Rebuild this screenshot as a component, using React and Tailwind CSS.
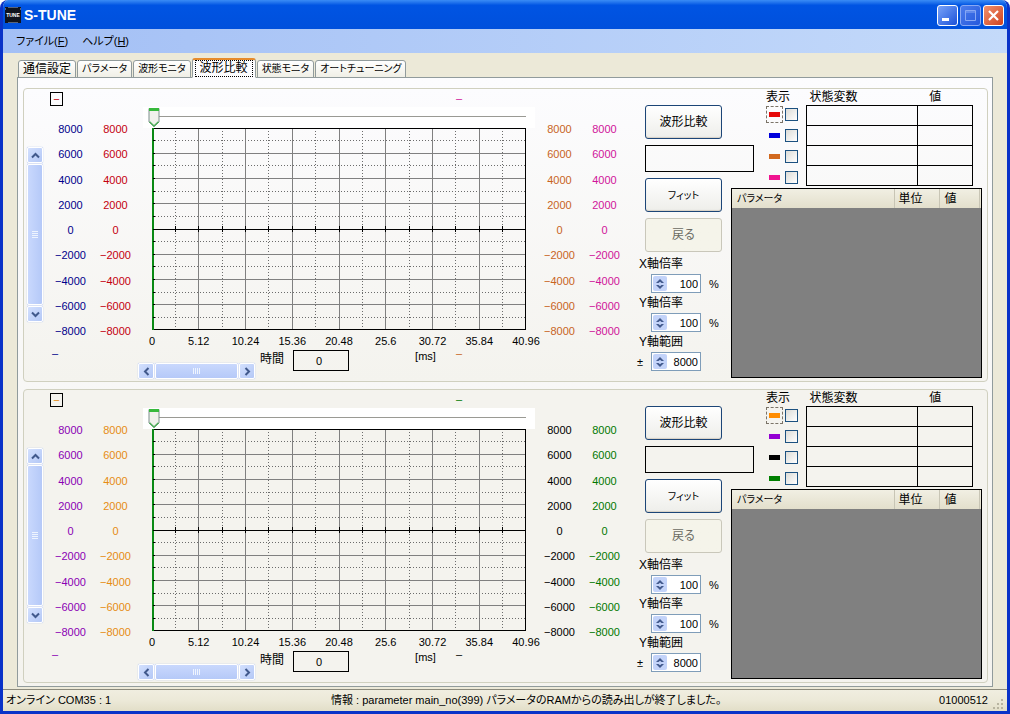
import React, { useId, useState } from "react";

const TABS = [
  { name: "通信設定", kana: false },
  { name: "パラメータ", kana: true },
  { name: "波形モニタ", kana: true },
  { name: "波形比較", kana: false },
  { name: "状態モニタ", kana: true },
  { name: "オートチューニング", kana: true },
];

const Y_TICKS = [8000, 6000, 4000, 2000, 0, -2000, -4000, -6000, -8000];
const X_TICKS = ["0", "5.12", "10.24", "15.36", "20.48", "25.6", "30.72", "35.84", "40.96"];

const SCOPES = [
  {
    id: "upper",
    panel: "bg-linear-to-b from-[#fcfcfe] to-[#f4f3ee]",
    axes: ["text-[#00008b]", "text-[#c40010]", "text-[#c8641e]", "text-[#d0149a]"],
    units: ["text-[#c40010]", "text-[#d0149a]", "text-[#00008b]", "text-[#c8641e]"],
    legend: ["bg-[#e60a0a]", "bg-[#0000dc]", "bg-[#d2691e]", "bg-[#f01490]"],
  },
  {
    id: "lower",
    panel: "bg-[#f4f3ee]",
    axes: ["text-[#8a00b4]", "text-[#e68c14]", "text-black", "text-[#007800]"],
    units: ["text-[#e68c14]", "text-[#007800]", "text-[#8a00b4]", "text-black"],
    legend: ["bg-[#ff8c00]", "bg-[#9400d3]", "bg-black", "bg-[#008000]"],
  },
];

const Chevron = ({ d }) => (
  <svg width="9" height="9" viewBox="0 0 9 9" fill="none" stroke="#41598c" strokeWidth="2">
    <path d={d} />
  </svg>
);

const arrowClass =
  "flex size-4 shrink-0 items-center justify-center rounded-xs border border-white bg-linear-to-br from-[#d3e0fe] to-[#b4c8f6] shadow-[0_0_1px_#7d9be0]";

const VerticalScroll = () => (
  <div className="mt-10 flex h-[175px] w-4 flex-col gap-px bg-[#f2f3fb]">
    <button type="button" aria-label="上へ" className={arrowClass}>
      <Chevron d="M1 6.5 4.5 3 8 6.5" />
    </button>
    <div className="flex flex-1 flex-col items-center justify-center gap-px rounded-xs border border-white bg-linear-to-r from-[#c9d8fd] to-[#b5c9f8] shadow-[0_0_1px_#7d9be0]">
      {[0, 1, 2, 3].map((i) => (
        <span key={i} className="h-px w-1.5 bg-[#eef4fe]" />
      ))}
    </div>
    <button type="button" aria-label="下へ" className={arrowClass}>
      <Chevron d="M1 2.5 4.5 6 8 2.5" />
    </button>
  </div>
);

const HorizontalScroll = () => (
  <div className="flex h-4 w-[117px] shrink-0 gap-px bg-[#f2f3fb]">
    <button type="button" aria-label="左へ" className={arrowClass}>
      <Chevron d="M6.5 1 3 4.5 6.5 8" />
    </button>
    <div className="flex flex-1 items-center justify-center gap-px rounded-xs border border-white bg-linear-to-b from-[#c9d8fd] to-[#b5c9f8] shadow-[0_0_1px_#7d9be0]">
      {[0, 1, 2, 3].map((i) => (
        <span key={i} className="h-1.5 w-px bg-[#eef4fe]" />
      ))}
    </div>
    <button type="button" aria-label="右へ" className={arrowClass}>
      <Chevron d="M2.5 1 6 4.5 2.5 8" />
    </button>
  </div>
);

const AxisLabels = ({ color, column }) => (
  <div
    className={`row-start-2 mt-[15px] flex h-[216px] flex-col justify-between text-center leading-[14px] ${column} ${color}`}
  >
    {Y_TICKS.map((v) => (
      <span key={v}>{v < 0 ? `−${-v}` : v}</span>
    ))}
  </div>
);

const TimeSlider = () => {
  const [time, setTime] = useState(0);
  return (
    <div className="relative mr-0.5 ml-[5px] h-[21px] bg-white">
      <div className="mr-[9px] ml-4 h-[10px] border-b border-[#9a9a94]" />
      <div className="absolute inset-y-0 right-[15px] left-[11px]">
        <svg
          className="absolute top-0 -ml-[6px]"
          style={{ left: `${time}%` }}
          width="12"
          height="20"
          viewBox="0 0 12 20"
        >
          <path d="M1 1.5h10V15L6 19.5 1 15Z" fill="#f0f1ec" stroke="#7c8f8c" />
          <path d="M1 1h10v3H1Z" fill="#37b93c" />
          <path d="M1.500 14.800 6 19l4.500-4.200" fill="none" stroke="#4fae5a" strokeWidth="1.500" />
        </svg>
      </div>
      <input
        type="range"
        aria-label="カーソル"
        min="0"
        max="100"
        value={time}
        onChange={(e) => setTime(Number(e.target.value))}
        className="absolute inset-0 h-full w-full opacity-0"
      />
    </div>
  );
};

const Plot = () => {
  const steps = Array.from({ length: 15 }, (_, i) => i + 1);
  const pos = (i) => `${i * 6.25}%`;
  return (
    <svg className="block h-[202px] w-full" shapeRendering="crispEdges">
      {steps.map((i) => (
        <g key={i} stroke={i % 2 ? "#6c6c6c" : "#808080"} strokeDasharray={i % 2 ? "1 2" : undefined}>
          <line x1={pos(i)} x2={pos(i)} y1="0" y2="100%" />
          <line x1="0" x2="100%" y1={pos(i)} y2={pos(i)} />
        </g>
      ))}
      <line x1="0" x2="100%" y1="50%" y2="50%" stroke="#000" />
      {steps.map((i) => (
        <line key={i} x1={pos(i)} x2={pos(i)} y1="98" y2="104" stroke="#000" />
      ))}
      <rect width="100%" height="100%" fill="none" stroke="#000" strokeWidth="2" />
      <line x1="1" x2="1" y1="0" y2="100%" stroke="#0a8a14" strokeWidth="2" />
      {steps.map((i) => (
        <line key={i} x1="1" x2="3" y1={pos(i)} y2={pos(i)} stroke="#000" />
      ))}
    </svg>
  );
};

const PushButton = ({ children, disabled }) => (
  <button
    type="button"
    disabled={disabled}
    className="h-[34px] w-[77px] shrink-0 rounded-[3px] border border-[#1c4577] bg-linear-to-b from-white to-[#eeeeea] text-xs shadow-[inset_0_-1px_1px_#d6d0c5] disabled:border-[#c9c7ba] disabled:from-[#f5f4ea] disabled:to-[#f5f4ea] disabled:text-[#6a6a62] disabled:shadow-none"
  >
    {children}
  </button>
);

const Spinner = ({ label, initial, step, prefix, suffix }) => {
  const id = useId();
  const [value, setValue] = useState(initial);
  return (
    <div>
      <label htmlFor={id} className="ml-0.5 block h-[18px] text-xs leading-[18px]">
        {label}
      </label>
      <div className="flex h-[21px] items-center leading-[14px]">
        <span className="w-[14px]">{prefix}</span>
        <div className="flex h-[19px] w-[50px] shrink-0 border border-[#7f9db9] bg-white p-px">
          <div className="flex w-[14px] shrink-0 flex-col rounded-xs bg-[#c3d3f9]">
            <button
              type="button"
              aria-label={`${label} 増`}
              onClick={() => setValue(value + step)}
              className="flex flex-1 items-end justify-center pb-px"
            >
              <svg width="8" height="4" viewBox="0 0 8 4" fill="#41598c">
                <path d="M4 0 8 4H5.500L4 2.800 2.500 4H0Z" />
              </svg>
            </button>
            <button
              type="button"
              aria-label={`${label} 減`}
              onClick={() => setValue(value - step)}
              className="flex flex-1 items-start justify-center pt-px"
            >
              <svg width="8" height="4" viewBox="0 0 8 4" fill="#41598c">
                <path d="M4 4 8 0H5.500L4 1.200 2.500 0H0Z" />
              </svg>
            </button>
          </div>
          <input
            id={id}
            type="text"
            inputMode="numeric"
            value={value}
            onChange={(e) => setValue(Number(e.target.value) || 0)}
            className="w-full min-w-0 bg-transparent pr-px text-right leading-[14px] outline-none"
          />
        </div>
        <span className="ml-2">{suffix}</span>
      </div>
    </div>
  );
};

const Legend = ({ colors }) => (
  <div className="w-[34px] shrink-0">
    <div className="h-[15px] text-xs leading-4 whitespace-nowrap">表示</div>
    {colors.map((color, i) => (
      <label key={color} className="flex h-[21px] items-center gap-0.5">
        <span
          className={`flex h-[17px] w-[17px] items-center justify-center border border-dashed ${
            i === 0 ? "border-[#7b7468]" : "border-transparent"
          }`}
        >
          <span className={`h-[5px] w-[11px] ${color}`} />
        </span>
        <input
          type="checkbox"
          aria-label={`系列 ${i + 1}`}
          className="size-[13px] appearance-none border border-[#1c5180] bg-linear-to-br from-[#dcdcd7] to-white checked:bg-[#21a121]"
        />
      </label>
    ))}
  </div>
);

const StateTable = () => (
  <table className="h-[97px] flex-1 table-fixed border-collapse text-xs">
    <thead>
      <tr className="h-4 text-left leading-4">
        <th className="w-2/3 pl-[3px] font-normal">状態変数</th>
        <th className="w-1/3 pl-3 font-normal">値</th>
      </tr>
    </thead>
    <tbody>
      {[0, 1, 2, 3].map((row) => (
        <tr key={row} className="h-5">
          <td className="border border-black" />
          <td className="border border-black" />
        </tr>
      ))}
    </tbody>
  </table>
);

const ParameterTable = () => (
  <div className="mt-0.5 flex-1 border border-black bg-[#808080]">
    <table className="w-full table-fixed border-collapse text-xs">
      <thead>
        <tr className="h-[19px] bg-linear-to-b from-[#f1efe3] to-[#e3dfcc] text-left leading-4">
          <th className="border-r border-[#c8c5b5] pl-[5px] text-[10px] font-normal">パラメータ</th>
          <th className="w-[45px] border-r border-[#c8c5b5] pl-1 font-normal">単位</th>
          <th className="w-[40px] border-r border-[#c8c5b5] pl-[5px] font-normal">値</th>
          <th className="w-0.5" />
        </tr>
      </thead>
    </table>
  </div>
);

const Scope = ({ scope }) => (
  <section className={`flex rounded-[4px] border border-[#d0d0bf] pr-[5px] pl-[3px] ${scope.panel}`}>
    <div className="grid flex-1 grid-cols-[21px_45px_45px_1fr_45px_45px] grid-rows-[18px_241px_33px]">
      {/* upper unit boxes */}
      <div
        className={`col-start-2 row-start-1 mt-[3px] ml-0.5 flex h-[14px] w-[13px] items-center justify-center border border-black ${scope.units[0]}`}
      >
        −
      </div>
      <div className={`col-start-4 row-start-1 mr-[75px] text-right leading-[18px] ${scope.units[1]}`}>–</div>

      {/* axes and plot */}
      <div className="col-start-1 row-start-2">
        <VerticalScroll />
      </div>
      <AxisLabels column="col-start-2" color={scope.axes[0]} />
      <AxisLabels column="col-start-3" color={scope.axes[1]} />
      <div className="col-start-4 row-start-2 min-w-0">
        <TimeSlider />
        <div className="mr-[11px] ml-[14px]">
          <Plot />
          <div className="mt-1 flex justify-between leading-[14px]">
            {X_TICKS.map((t) => (
              <span key={t} className="flex w-0 justify-center">
                {t}
              </span>
            ))}
          </div>
        </div>
      </div>
      <AxisLabels column="col-start-5" color={scope.axes[2]} />
      <AxisLabels column="col-start-6" color={scope.axes[3]} />

      {/* time row */}
      <div className={`col-start-2 row-start-3 pl-1 leading-[10px] ${scope.units[2]}`}>–</div>
      <div className="col-start-4 row-start-3 flex items-start pt-px">
        <div className="mt-[14px]">
          <HorizontalScroll />
        </div>
        <label htmlFor={`${scope.id}-time`} className="ml-[5px] w-[33px] text-xs leading-5">
          時間
        </label>
        <input
          id={`${scope.id}-time`}
          readOnly
          value="0"
          className="mt-px h-[21px] w-14 border border-black bg-transparent pr-1 text-center"
        />
        <span className="ml-auto leading-[14px]">[ms]</span>
        <span className={`mr-[75px] ml-5 leading-[8px] ${scope.units[3]}`}>–</span>
      </div>
    </div>

    <div className="ml-[10px] flex w-[94px] shrink-0 flex-col pt-4">
      <div className="ml-2 flex flex-col gap-1.5">
        <PushButton>波形比較</PushButton>
        <output className="block h-[27px] w-[109px] border border-black" />
        <PushButton>
          <span className="text-[10px]">フィット</span>
        </PushButton>
        <PushButton disabled>戻る</PushButton>
      </div>
      <div className="mt-[3px]">
        <Spinner label="X軸倍率" initial={100} step={10} suffix="%" />
        <Spinner label="Y軸倍率" initial={100} step={10} suffix="%" />
        <Spinner label="Y軸範囲" initial={8000} step={1000} prefix="±" />
      </div>
    </div>

    <div className="flex w-[251px] shrink-0 flex-col pb-[3px]">
      <div className="flex h-[97px] gap-1.5 pr-[9px] pl-[35px]">
        <Legend colors={scope.legend} />
        <StateTable />
      </div>
      <ParameterTable />
    </div>
  </section>
);

const TitleBar = () => (
  <header className="flex h-[29px] items-center bg-linear-to-b from-[#3a8cf5] via-[#0054e3] to-[#0050dc] pr-[3px] pl-0.5 [--tw-gradient-via-position:18%]">
    <svg width="16" height="16" viewBox="0 0 16 16">
      <rect width="16" height="16" fill="#10141e" />
      <path d="M3 .5h10M3 15.500h10M.5 3V1M15.500 3V1" stroke="#5a6478" />
      <text x="8" y="10" fill="#fff" textAnchor="middle" fontSize="5" fontWeight="bold" fontFamily="Liberation Sans">
        TUNE
      </text>
    </svg>
    <h1 className="ml-[3px] flex-1 text-sm font-bold text-white">S-TUNE</h1>
    <div className="flex gap-0.5 pt-0.5">
      <button
        type="button"
        aria-label="最小化"
        className="size-[21px] rounded-[3px] border border-white bg-linear-to-br from-[#7aa2f8] to-[#1c50d8]"
      >
        <svg width="19" height="19" viewBox="0 0 19 19">
          <path d="M4 12h7v3H4Z" fill="#fff" />
        </svg>
      </button>
      <button
        type="button"
        aria-label="最大化"
        disabled
        className="size-[21px] rounded-[3px] border border-[#88a8f4] bg-linear-to-br from-[#4c7cec] to-[#2458dc]"
      >
        <svg width="19" height="19" viewBox="0 0 19 19" fill="none" stroke="#88a8f4">
          <path d="M4.500 4.500h10v10h-10ZM4.500 6h10" />
        </svg>
      </button>
      <button
        type="button"
        aria-label="閉じる"
        className="size-[21px] rounded-[3px] border border-white bg-linear-to-br from-[#f0906c] to-[#d0401c]"
      >
        <svg width="19" height="19" viewBox="0 0 19 19" stroke="#fff" strokeWidth="2.200">
          <path d="M5 5l9 9M14 5l-9 9" />
        </svg>
      </button>
    </div>
  </header>
);

const App = () => {
  const [active, setActive] = useState("波形比較");

  return (
    <div className="flex min-h-screen flex-col overflow-hidden rounded-t-lg border-x-3 border-b-3 border-[#0a32c8] bg-[#ece9d8] font-['Liberation_Sans','Noto_Sans_CJK_JP',sans-serif] text-[11px] text-black [font-feature-settings:'palt']">
      <TitleBar />

      <nav className="flex h-6 items-center gap-[14px] bg-linear-to-r from-[#a3bff5] to-[#c4dafa] pl-[13px]">
        <button type="button">
          ファイル(<u>F</u>)
        </button>
        <button type="button">
          ヘルプ(<u>H</u>)
        </button>
      </nav>

      <main className="flex flex-1 flex-col px-[14px] pt-[5px] pb-0.5">
        <div role="tablist" className="relative z-10 -mb-px flex h-5 items-end gap-px pl-px">
          {TABS.map((tab) => (
            <button
              key={tab.name}
              type="button"
              role="tab"
              aria-selected={tab.name === active}
              onClick={() => setActive(tab.name)}
              className={`rounded-t-[3px] border whitespace-nowrap ${
                tab.kana ? "text-[10px]" : "text-xs"
              } ${
                tab.name === active
                  ? "h-5 border-x-[#919b9c] border-t-2 border-t-[#e68b2c] border-b-[#fcfcfe] bg-[#fcfcfe] px-0.5"
                  : "h-[18px] border-[#919b9c] bg-linear-to-b from-white to-[#f0efe6] px-1 leading-4"
              }`}
            >
              {tab.name === active ? (
                <span className="block border border-dotted border-black px-1 leading-[15px]">{tab.name}</span>
              ) : (
                tab.name
              )}
            </button>
          ))}
        </div>

        <div
          role="tabpanel"
          className="flex flex-1 flex-col gap-[7px] border border-[#919b9c] bg-linear-to-b from-[#fcfcfe] to-[#f4f3ee] px-[4px] pt-[10px] pb-[3px] pl-[5px]"
        >
          {SCOPES.map((scope) => (
            <Scope key={scope.id} scope={scope} />
          ))}
        </div>
      </main>

      <footer className="flex h-[22px] items-center border-t border-[#8c8a7c] bg-linear-to-b from-[#f0eee0] via-[#ece9d8] to-[#e2dec8] pr-0.5 pl-[3px]">
        <span className="w-[325px]">オンライン COM35 : 1</span>
        <span className="flex-1">
          情報 : parameter main_no(399) パラメータのRAMからの読み出しが終了しました。
        </span>
        <span>01000512</span>
        <svg className="ml-1 self-end" width="13" height="13" viewBox="0 0 13 13" fill="#b8b4a0">
          <path d="M9 1h2v2H9zM9 5h2v2H9zM9 9h2v2H9zM5 5h2v2H5zM5 9h2v2H5zM1 9h2v2H1z" />
        </svg>
      </footer>
    </div>
  );
};

export default App;
